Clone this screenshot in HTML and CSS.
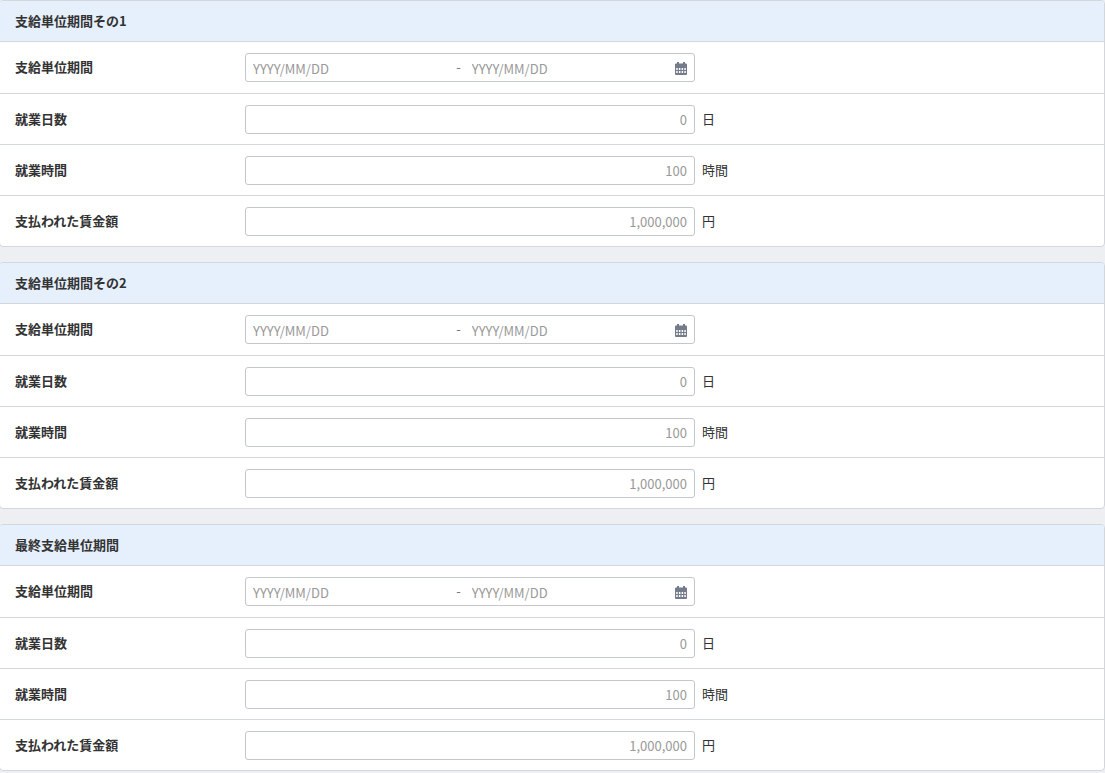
FILE: index.html
```html
<!DOCTYPE html>
<html lang="ja">
<head>
    <meta charset="UTF-8">
    <meta name="viewport" content="width=device-width, initial-scale=1.0">
    <title>支給単位期間</title>
    <link rel="stylesheet" href="styles.css">
</head>
<body>
    <svg class="defs" aria-hidden="true">
        <symbol id="calendar" viewBox="0 0 12 13">
            <path fill-rule="evenodd" d="M2 0h2v1.500h4V0h2v1.500h1a1 1 0 0 1 1 1V5H0V2.500a1 1 0 0 1 1-1h1zM0 5h12v7a1 1 0 0 1-1 1H1a1 1 0 0 1-1-1zM1.200 6v2h1.500V6zm2.700 0v2h1.500V6zm2.700 0v2h1.500V6zm2.700 0v2h1.500V6zM1.200 9v2h1.500V9zm2.700 0v2h1.500V9zm2.700 0v2h1.500V9zm2.700 0v2h1.500V9z"/>
        </symbol>
    </svg>
    <form class="periods">
        <section class="card">
            <h2 class="card-title">支給単位期間その1</h2>
            <div class="row">
                <label class="label" for="start-1">支給単位期間</label>
                <div class="field date-range">
                    <input class="date" id="start-1" type="text" placeholder="YYYY/MM/DD">
                    <span class="dash">-</span>
                    <input class="date" type="text" placeholder="YYYY/MM/DD" aria-label="支給単位期間 終了日">
                    <button class="calendar-btn" type="button" aria-label="カレンダー"><svg class="icon"><use href="#calendar"/></svg></button>
                </div>
            </div>
            <div class="row">
                <label class="label" for="days-1">就業日数</label>
                <input class="field number" id="days-1" type="text" placeholder="0">
                <span class="unit">日</span>
            </div>
            <div class="row">
                <label class="label" for="hours-1">就業時間</label>
                <input class="field number" id="hours-1" type="text" placeholder="100">
                <span class="unit">時間</span>
            </div>
            <div class="row">
                <label class="label" for="wage-1">支払われた賃金額</label>
                <input class="field number" id="wage-1" type="text" placeholder="1,000,000">
                <span class="unit">円</span>
            </div>
        </section>

        <section class="card">
            <h2 class="card-title">支給単位期間その2</h2>
            <div class="row">
                <label class="label" for="start-2">支給単位期間</label>
                <div class="field date-range">
                    <input class="date" id="start-2" type="text" placeholder="YYYY/MM/DD">
                    <span class="dash">-</span>
                    <input class="date" type="text" placeholder="YYYY/MM/DD" aria-label="支給単位期間 終了日">
                    <button class="calendar-btn" type="button" aria-label="カレンダー"><svg class="icon"><use href="#calendar"/></svg></button>
                </div>
            </div>
            <div class="row">
                <label class="label" for="days-2">就業日数</label>
                <input class="field number" id="days-2" type="text" placeholder="0">
                <span class="unit">日</span>
            </div>
            <div class="row">
                <label class="label" for="hours-2">就業時間</label>
                <input class="field number" id="hours-2" type="text" placeholder="100">
                <span class="unit">時間</span>
            </div>
            <div class="row">
                <label class="label" for="wage-2">支払われた賃金額</label>
                <input class="field number" id="wage-2" type="text" placeholder="1,000,000">
                <span class="unit">円</span>
            </div>
        </section>

        <section class="card">
            <h2 class="card-title">最終支給単位期間</h2>
            <div class="row">
                <label class="label" for="start-3">支給単位期間</label>
                <div class="field date-range">
                    <input class="date" id="start-3" type="text" placeholder="YYYY/MM/DD">
                    <span class="dash">-</span>
                    <input class="date" type="text" placeholder="YYYY/MM/DD" aria-label="支給単位期間 終了日">
                    <button class="calendar-btn" type="button" aria-label="カレンダー"><svg class="icon"><use href="#calendar"/></svg></button>
                </div>
            </div>
            <div class="row">
                <label class="label" for="days-3">就業日数</label>
                <input class="field number" id="days-3" type="text" placeholder="0">
                <span class="unit">日</span>
            </div>
            <div class="row">
                <label class="label" for="hours-3">就業時間</label>
                <input class="field number" id="hours-3" type="text" placeholder="100">
                <span class="unit">時間</span>
            </div>
            <div class="row">
                <label class="label" for="wage-3">支払われた賃金額</label>
                <input class="field number" id="wage-3" type="text" placeholder="1,000,000">
                <span class="unit">円</span>
            </div>
        </section>
    </form>
</body>
</html>
```

FILE: styles.css
```css
* {
    box-sizing: border-box;
}

body {
    margin: 0;
    background-color: #eeeff3;
    color: #333;
    font-family: "Noto Sans CJK JP", sans-serif;
    font-size: 13px;
    line-height: 20px;
}

.defs {
    display: none;
}

.periods {
    display: flex;
    flex-direction: column;
    gap: 15px;
    margin-left: -1px;
}

.card {
    background-color: #fff;
    border: 1px solid #d3d6db;
    border-radius: 4px;
}

.card-title {
    margin: 0;
    padding: 10px 15px;
    background-color: #e6f0fd;
    border-radius: 3px 3px 0 0;
    font-size: 13px;
    font-weight: bold;
}

.row {
    display: flex;
    align-items: center;
    padding: 11px 15px 10px;
    border-top: 1px solid #d3d6db;
}

/* date row is 1px taller */
.card-title + .row {
    padding-bottom: 11px;
}

.label {
    width: 230px;
    flex-shrink: 0;
    padding-bottom: 2px;
    font-weight: bold;
}

/* inputs */
.field {
    width: 450px;
    height: 29px;
    padding: 0 7px;
    background-color: #fff;
    border: 1px solid #c2c7cc;
    border-radius: 3px;
    font-family: inherit;
    font-size: 13px;
    color: #333;
}

.number {
    text-align: right;
}

.date-range {
    display: flex;
    align-items: center;
}

.date {
    flex: 1;
    min-width: 0;
    height: 27px;
    padding: 1px 0 0;
    border: none;
    background: none;
    outline: none;
    font-family: inherit;
    font-size: 13px;
    color: #333;
}

.date::placeholder,
.number::placeholder {
    color: #999;
    opacity: 1;
}

.dash {
    padding: 0 11px 2px 0;
    color: #777;
}

.calendar-btn {
    display: flex;
    padding: 1px 0 0;
    border: none;
    background: none;
    color: #747b8b;
    cursor: pointer;
}

.icon {
    width: 12px;
    height: 13px;
    fill: currentColor;
}

.unit {
    margin-left: 7px;
    padding-bottom: 2px;
}
```
